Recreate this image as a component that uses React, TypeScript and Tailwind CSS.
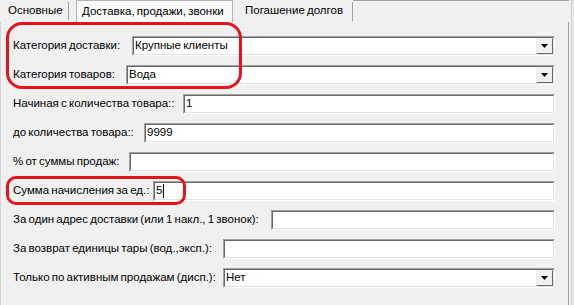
import React from "react";

type Row = {
  label: string;
  labelWidth: string;
  value?: string;
  combo?: boolean;
  caret?: boolean;
};

const rows: Row[] = [
  { label: "Категория доставки:", labelWidth: "w-[119px]", value: "Крупные клиенты", combo: true },
  { label: "Категория товаров:", labelWidth: "w-[113px]", value: "Вода", combo: true },
  { label: "Начиная с количества товара::", labelWidth: "w-[170px]", value: "1" },
  { label: "до количества товара::", labelWidth: "w-[131px]", value: "9999" },
  { label: "% от суммы продаж:", labelWidth: "w-[116px]", value: "" },
  { label: "Сумма начисления за ед.:", labelWidth: "w-[140px]", value: "5", caret: true },
  { label: "За один адрес доставки (или 1 накл., 1 звонок):", labelWidth: "w-[258px]", value: "" },
  { label: "За возврат единицы тары (вод.,эксп.):", labelWidth: "w-[210px]", value: "" },
  { label: "Только по активным продажам (дисп.):", labelWidth: "w-[210px]", value: "Нет", combo: true },
];

const DropButton = () => (
  <div className="w-[17px] h-full border-t border-l border-t-[#f0f0f0] border-l-[#f0f0f0] border-b border-r border-b-[#696969] border-r-[#696969] bg-[#f0f0f0] flex items-center justify-center">
    <svg width="7" height="4" viewBox="0 0 7 4">
      <path d="M0 0h7L3.5 4z" fill="#000" />
    </svg>
  </div>
);

const Field = ({ value, combo, caret }: Row) => (
  <div className="flex-1 h-[20px] border-t border-l border-t-[#a0a0a0] border-l-[#a0a0a0] border-b border-r border-b-[#ffffff] border-r-[#ffffff]">
    <div className="h-full border-t border-l border-t-[#696969] border-l-[#696969] border-b border-r border-b-[#e3e3e3] border-r-[#e3e3e3] bg-white flex items-center">
      <span className="flex-1 pl-[1px] leading-none flex items-center">
        {value}
        {caret && <span className="inline-block w-px h-[14px] bg-black ml-px" />}
      </span>
      {combo && <DropButton />}
    </div>
  </div>
);

export default function App() {
  return (
    <div className="relative w-[574px] h-[305px] overflow-hidden bg-[#f0f0f0] text-[11.5px] [word-spacing:-1px] text-black font-['Liberation_Sans',Arial,sans-serif]">
      <div className="flex">
        <div className="w-[569px]">
          {/* tabs */}
          <div className="flex h-[22px]">
            <div className="w-[68px] pl-[8px] flex items-center">Основные</div>
            <div className="w-px mt-[2px] h-[18px] bg-[#a0a0a0]" />
            <div className="w-[7px]" />
            <div className="w-[157px] h-[22px] border border-[#b4b4b4] border-b-0 bg-[#f9f9f9] pl-[5px] flex items-center">
              Доставка, продажи, звонки
            </div>
            <div className="w-[119px] pl-[12px] flex items-center">Погашение долгов</div>
            <div className="w-px mt-[2px] h-[19px] bg-[#a0a0a0]" />
            <div className="flex-1 border-t border-[#a0a0a0]" />
          </div>
          {/* panel */}
          <div className="h-[283px] border-l border-r border-l-[#d4d4d4] border-r-[#a0a0a0] pt-[14px] pl-[12px] pr-[13px] flex flex-col gap-[9px]">
            {rows.map((r) => (
              <div key={r.label} className="flex items-center h-[20px]">
                <span className={`${r.labelWidth} shrink-0 whitespace-nowrap`}>{r.label}</span>
                <Field {...r} />
              </div>
            ))}
          </div>
        </div>
        <div className="w-[2px]" />
        <div className="w-px h-[305px] bg-[#c9d3de]" />
        <div className="w-[2px] h-[305px] bg-[#e8e8e8]" />
      </div>

      {/* highlight marks */}
      <div className="absolute left-[6px] top-[22px] w-[236px] h-[67px] border-[3px] border-[#e5141b] rounded-[16px]" />
      <div className="absolute left-[6px] top-[176px] w-[180px] h-[29px] border-[3px] border-[#e5141b] rounded-[10px]" />
    </div>
  );
}
